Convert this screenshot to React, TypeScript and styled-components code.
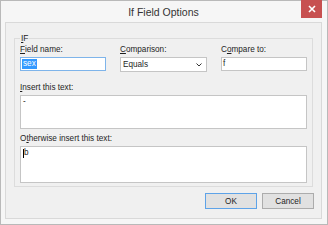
import React from "react";
import styled, { createGlobalStyle } from "styled-components";

const Global = createGlobalStyle`
  html, body { margin: 0; padding: 0; background: #ffffff; }
  body { font-family: "Liberation Sans", Arial, sans-serif; }
  * { box-sizing: border-box; }
`;

const Window = styled.div`
  width: 328px;
  height: 225px;
  background: #f6f6f6;
  border: 1px solid #b9b9b9;
  display: flex;
  flex-direction: column;
  padding: 0 5px 5px 4px;
`;

const TitleBar = styled.div`
  height: 21px;
  position: relative;
  display: flex;
  align-items: center;
  justify-content: center;
  font-family: "Liberation Sans", Arial, sans-serif;
  font-size: 10.5px;
  color: #333333;
  padding-top: 1px;
`;

const CloseButton = styled.div`
  position: absolute;
  right: 0;
  top: -1px;
  width: 21px;
  height: 18px;
  background: #c75050;
  display: flex;
  align-items: center;
  justify-content: center;
`;

const Client = styled.div`
  flex: 1;
  background: #f0f0f0;
  border: 1px solid #d9d9d9;
  display: flex;
  flex-direction: column;
  padding: 10px 8px 0 8px;
`;

const Group = styled.fieldset`
  margin: 0;
  border: 1px solid #dcdcdc;
  border-radius: 0;
  padding: 2px 5px 5px 5px;
  height: 154px;
  display: flex;
  flex-direction: column;
`;

const Legend = styled.legend`
  font-size: 8.4px;
  color: #1e1e1e;
  padding: 0 1px;
  margin-left: 0;
`;

const Row = styled.div`
  display: grid;
  grid-template-columns: 86px 87px 86px;
  column-gap: 14px;
  justify-content: space-between;
`;

const Field = styled.div`
  display: flex;
  flex-direction: column;
`;

const Label = styled.div`
  font-size: 8.2px;
  color: #1e1e1e;
  line-height: 10px;
  height: 10px;
  margin-bottom: 2px;
  white-space: nowrap;
`;

const U = styled.span`
  text-decoration: underline;
`;

const TextBox = styled.div<{ $focused?: boolean }>`
  height: 14px;
  background: #ffffff;
  border: 1px solid ${(p) => (p.$focused ? "#7eb4ea" : "#c5c5c5")};
  font-size: 8.2px;
  line-height: 12px;
  padding-left: 1px;
  color: #1e1e1e;
  display: flex;
  align-items: center;
`;

const Selected = styled.span`
  background: #3399ff;
  color: #ffffff;
  padding: 0 1px;
  line-height: 10px;
`;

const Select = styled.div`
  height: 15px;
  background: #ffffff;
  border: 1px solid #c5c5c5;
  font-size: 8.2px;
  color: #1e1e1e;
  display: flex;
  align-items: center;
  justify-content: space-between;
  padding: 0 4px 0 2px;
`;

const TextArea = styled.div<{ $h: number }>`
  height: ${(p) => p.$h}px;
  background: #ffffff;
  border: 1px solid #c5c5c5;
  font-size: 8.2px;
  line-height: 10px;
  color: #1e1e1e;
  padding: 1px 2px;
  display: flex;
  align-items: flex-start;
`;

const Caret = styled.span`
  display: inline-block;
  width: 1px;
  height: 9px;
  background: #000;
  margin-top: 1px;
`;

const Section = styled.div<{ $top: number }>`
  margin-top: ${(p) => p.$top}px;
  display: flex;
  flex-direction: column;
`;

const Buttons = styled.div`
  display: flex;
  justify-content: flex-end;
  gap: 5px;
  margin-top: 6px;
  margin-right: -1px;
`;

const Button = styled.div<{ $default?: boolean }>`
  width: 52px;
  height: 16px;
  background: #e1e1e1;
  border: 1px solid ${(p) => (p.$default ? "#5ea3e8" : "#acacac")};
  font-size: 8.2px;
  color: #1e1e1e;
  display: flex;
  align-items: center;
  justify-content: center;
`;

export default function App() {
  return (
    <>
      <Global />
      <Window>
        <TitleBar>
          If Field Options
          <CloseButton>
            <svg width="8" height="8" viewBox="0 0 8 8">
              <path d="M1 1 L7 7 M7 1 L1 7" stroke="#ffffff" strokeWidth="1.6" />
            </svg>
          </CloseButton>
        </TitleBar>
        <Client>
          <Group>
            <Legend>
              <U>I</U>F
            </Legend>
            <Row>
              <Field>
                <Label>
                  <U>F</U>ield name:
                </Label>
                <TextBox $focused>
                  <Selected>sex</Selected>
                </TextBox>
              </Field>
              <Field>
                <Label>
                  <U>C</U>omparison:
                </Label>
                <Select>
                  <span>Equals</span>
                  <svg width="6" height="4" viewBox="0 0 6 4">
                    <path d="M0.5 0.5 L3 3 L5.5 0.5" stroke="#333" strokeWidth="1" fill="none" />
                  </svg>
                </Select>
              </Field>
              <Field>
                <Label>
                  C<U>o</U>mpare to:
                </Label>
                <TextBox>f</TextBox>
              </Field>
            </Row>
            <Section $top={11}>
              <Label>
                <U>I</U>nsert this text:
              </Label>
              <TextArea $h={34}>-</TextArea>
            </Section>
            <Section $top={5}>
              <Label>
                O<U>t</U>herwise insert this text:
              </Label>
              <TextArea $h={37}>
                <Caret />
                b
              </TextArea>
            </Section>
          </Group>
          <Buttons>
            <Button $default>OK</Button>
            <Button>Cancel</Button>
          </Buttons>
        </Client>
      </Window>
    </>
  );
}
